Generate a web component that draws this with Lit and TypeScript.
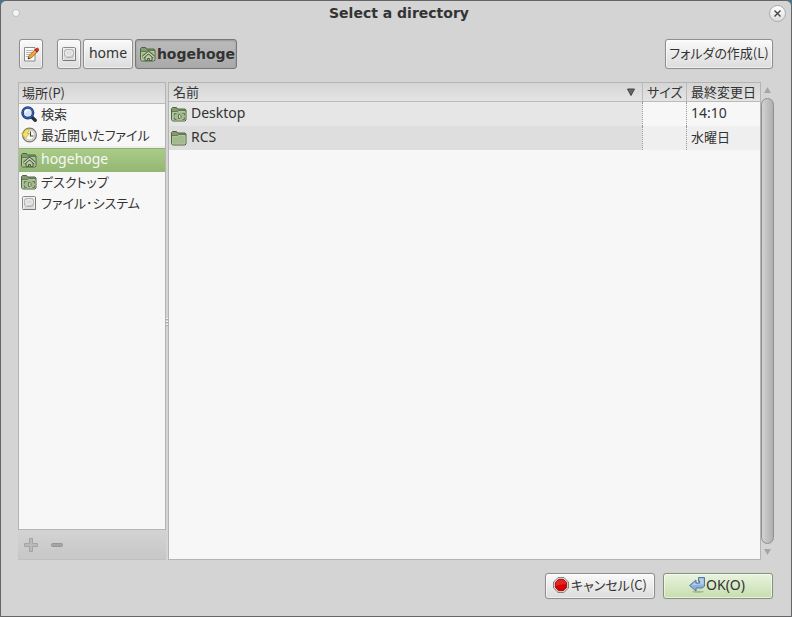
import { LitElement, html, css, svg, nothing } from "lit";
import { customElement, property } from "lit/decorators.js";
import { classMap } from "lit/directives/class-map.js";

const folderBase = svg`
  <path d="M.5 13.500v-11l1-1h4l1 1.500h7.500l1 1v10l-1 1h-12.500z" fill="#849b71" stroke="#4f6344"/>
  <path d="M1.500 6.500h5l1-1h6.500v8.500h-12.500z" fill="#a3b98e" stroke="#b3c79f"/>
  <path d="M1 5.500h5.500l1-1h6.500" fill="none" stroke="#647a56"/>`;

const icons = {
  folder: folderBase,
  home: svg`${folderBase}
    <path d="M5 10.500v4h7v-4L8.500 7.500z" fill="#b9cba7" stroke="#4c6042"/>
    <path d="M3 11.200l5.500-4.700 5.500 4.700" fill="none" stroke="#4c6042" stroke-width="3"/>
    <path d="M3 11.200l5.500-4.700 5.500 4.700" fill="none" stroke="#cbdabc" stroke-width="1.300"/>
    <path d="M7.500 14.500v-2h2v2" fill="#92a97e" stroke="#4c6042"/>`,
  desktop: svg`${folderBase}
    <path d="M3.500 9.500v-2h2M11.500 7.500h2v2M13.500 11.500v2h-2M5.500 13.500h-2v-2" fill="none" stroke="#60755a"/>
    <path d="M7.500 8.500h1.500l1 1v2l-1 1h-1.500z" fill="#c3d4b2" stroke="#60755a"/>`,
  drive: svg`
    <rect x="1.500" y="1.500" width="13" height="13" rx="1" fill="#efefef" stroke="#8c8c8c"/>
    <path d="M14.500 2v12.500H2" fill="none" stroke="#777"/>
    <rect x="3.500" y="3.500" width="9" height="8" rx="2" fill="#cacaca" stroke="#b4b4b4"/>
    <ellipse cx="8" cy="7" rx="3.600" ry="2.400" fill="#dcdcdc" stroke="#f4f4f4"/>
    <path d="M4.500 10.500l3-2" stroke="#efefef"/>
    <path d="M3 13h10" stroke="#c8c8c8"/>`,
  edit: svg`
    <path d="M1.500 1.500h10.500v13.500h-10.500z" fill="#fafafa" stroke="#8b8b8b"/>
    <path d="M3 4.500h7M3 6.500h6M3 8.500h4M3 10.500h3" stroke="#b5b5b5"/>
    <path d="M5 13l1-3.200 6-6 2.200 2.200-6 6z" fill="#f0a63c" stroke="#8f5a14" stroke-width=".8"/>
    <path d="M11.800 4l1.500-1.500q1.200-.7 2 .2t.2 1.800L14.200 6z" fill="#e0342c" stroke="#a8201a"/>
    <path d="M5 13l.6-1.800 1.200 1.200z" fill="#222"/>`,
  search: svg`
    <path d="M11 11.300l3.200 3" stroke="#29303d" stroke-width="3.400" stroke-linecap="round"/>
    <circle cx="6.800" cy="6.800" r="5.300" fill="#d9e4f3" stroke="#18357f" stroke-width="2.600"/>
    <circle cx="6.800" cy="6.800" r="5.300" fill="none" stroke="#4a70be" stroke-width=".9"/>
    <path d="M4.200 6.500q.5-2.500 3-2.500" fill="none" stroke="#fff" stroke-width="1.300"/>`,
  recent: svg`
    <circle cx="8.500" cy="8" r="6.900" fill="#deded8" stroke="#77776f" stroke-width="1.200"/>
    <circle cx="8.500" cy="8" r="5" fill="#fafaf7" stroke="#b9b9b2" stroke-width=".8"/>
    <path d="M9.500 4.500v4.500h3" fill="none" stroke="#444" stroke-width="1.100"/>
    <path d="M8 1.800Q3 2.500 2.800 6.500H.5l4 4.800 4.200-4.800H6.200Q6.200 4.800 8 4.800z" fill="#f4e36a" stroke="#c4a728" stroke-width=".7"/>`,
  stop: svg`
    <path d="M5 .6h6L15.400 5v6L11 15.400H5L.6 11V5z" fill="#f3f3ef" stroke="#77776f"/>
    <path d="M5.500 2.300h5l3.200 3.200v5l-3.200 3.200h-5l-3.200-3.200v-5z" fill="#d40000" stroke="#8e0000" stroke-width=".8"/>
    <path d="M5.600 3h4.800l2.600 2.600v1.800Q8 7 3 9V5.600z" fill="#ef3a3a" opacity=".6"/>`,
  enter: svg`
    <ellipse cx="9" cy="14.800" rx="6" ry="1.100" fill="#000" opacity=".18"/>
    <path d="M.6 8.500L7 3v3h3.500V4.500H9.500v-4h6v8.500l-2 2H7v3z" fill="#8db0dc" stroke="#55779f" stroke-linejoin="round"/>
    <path d="M2.300 8.500L6 5.300V7h5.500V3.500h-1v-2h4v6Q8 7.500 2.300 8.500z" fill="#c3d7f0" opacity=".8"/>`,
  plus: svg`<path d="M6.500 1.500h3v5h5v3h-5v5h-3v-5h-5v-3h5z" fill="#b9bbb7" stroke="#a3a5a1" stroke-linejoin="round"/>`,
  minus: svg`<rect x="2.500" y="6.500" width="11" height="3" rx="1" fill="#a5a5a2" stroke="#969693"/>`,
};
type IconName = keyof typeof icons;

@customElement("ui-icon")
class UiIcon extends LitElement {
  @property() name: IconName = "folder";
  static styles = css`
    :host { display: block; flex: none; width: 16px; height: 16px; }
    svg { display: block; width: 100%; height: 100%; }
  `;
  render() {
    return html`<svg viewBox="0 0 16 16" aria-hidden="true">${icons[this.name]}</svg>`;
  }
}

interface Place { icon: IconName; label: string; ja?: boolean; selected?: boolean; }

const locations: Place[] = [
  { icon: "search", label: "検索", ja: true },
  { icon: "recent", label: "最近開いたファイル", ja: true },
];
const places: Place[] = [
  { icon: "home", label: "hogehoge", selected: true },
  { icon: "desktop", label: "デスクトップ", ja: true },
  { icon: "drive", label: "ファイル･システム", ja: true },
];
const files: { icon: IconName; name: string; size: string; modified: string; ja?: boolean }[] = [
  { icon: "desktop", name: "Desktop", size: "", modified: "14:10" },
  { icon: "folder", name: "RCS", size: "", modified: "水曜日", ja: true },
];

@customElement("app-root")
class AppRoot extends LitElement {
  static styles = css`
    :host {
      display: block;
      background: #3f7a8c;
      font: 14px/20px "Noto Sans", "Noto Sans CJK JP", sans-serif;
      color: #333;
    }
    * { box-sizing: border-box; }
    button { font: inherit; color: inherit; margin: 0; padding: 0; border: 0; background: none; }
    .ja, button.ja { font-family: "Noto Sans CJK JP", sans-serif; font-size: 13px; font-feature-settings: "palt"; }
    .window {
      display: flex;
      flex-direction: column;
      min-height: 100vh;
      padding: 0 17px 17px;
      border: 1px solid #666;
      border-radius: 6px 6px 0 0;
      background: #d4d4d4;
    }
    .titlebar {
      display: grid;
      grid-template-columns: 26px 1fr 20px;
      align-items: center;
      height: 24px;
      margin: 0 -12px;
    }
    .title { margin: 0; font: bold 14px/20px "DejaVu Sans", sans-serif; text-align: center; }
    .dot {
      width: 8px; height: 8px;
      margin-left: 6px;
      border: 1px solid #bbb;
      border-radius: 50%;
      background: #f6f6f6;
    }
    .close {
      display: grid;
      place-items: center;
      width: 17px; height: 17px;
      justify-self: end;
      border: 1px solid #aaa;
      border-radius: 50%;
      background: linear-gradient(#fff, #ddd);
    }
    .close svg { width: 7px; height: 7px; }
    .pathbar { display: flex; gap: 2px; margin: 14px 1px 13px; }
    .button {
      display: flex;
      align-items: center;
      justify-content: center;
      gap: 2px;
      border: 1px solid #8f8f8f;
      border-radius: 3px;
      background: linear-gradient(#fafafa, #dcdcdc);
      box-shadow: 0 0 1px #9998, inset 0 0 0 1px #fff8;
      white-space: nowrap;
    }
    .pathbar .button { height: 30px; min-width: 24px; padding: 0 3px; }
    .pathbar .crumb { width: 50px; padding-bottom: 2px; }
    .edit { margin-right: 12px; }
    .pathbar .button.current {
      width: 102px;
      gap: 1px;
      padding: 0 1px 0 4px;
      border-color: #777;
      background: linear-gradient(#bcbcbc, #a9a9a9);
      box-shadow: inset 0 1px 2px #0003;
      font: bold 14px/20px "DejaVu Sans", sans-serif;
    }
    .pathbar .create { width: 108px; margin-left: auto; padding-bottom: 2px; }
    .panes { display: flex; flex: 1; }
    .grip {
      display: flex;
      flex-direction: column;
      justify-content: center;
      gap: 2px;
      width: 2px;
    }
    .grip i { height: 1px; background: #f4f4f4; box-shadow: 0 1px #aaa; }
    .sidebar { display: flex; flex-direction: column; width: 148px; }
    .places { flex: 1; border: 1px solid #b4b4b4; background: #f7f7f7; }
    .head, th {
      border-bottom: 1px solid #bbb;
      background: linear-gradient(#d5d5d5, #e4e4e4);
    }
    .head { height: 21px; margin: 0; padding: 0 3px; font-weight: normal; }
    .list { margin: 0; padding: 0; list-style: none; }
    .list + .list { border-top: 2px solid #eee; }
    .place {
      display: flex;
      align-items: center;
      gap: 4px;
      width: 100%;
      height: 21px;
      padding: 0 2px;
      white-space: nowrap;
    }
    .place.ja { padding-bottom: 2px; }
    .place.selected {
      height: 24px;
      padding-bottom: 1px;
      background: linear-gradient(#a9cc88, #93b672);
      border-top: 1px solid #8fae72;
      color: #f7f7f7;
    }
    .place.selected span, .name span { padding-bottom: 2px; }
    .actions {
      display: flex;
      align-items: center;
      gap: 10px;
      height: 30px;
      padding: 0 5px;
      border-bottom: 1px solid #c0c0c0;
      background: linear-gradient(#d3d3d3, #c7c7c7);
    }
    .files { flex: 1; border: 1px solid #b4b4b4; background: #f7f7f7; }
    table { width: 100%; border-collapse: separate; border-spacing: 0; table-layout: fixed; }
    th { height: 19px; padding: 0 4px; line-height: 18px; font-weight: normal; text-align: left; white-space: nowrap; }
    th + th { border-left: 1px solid #bbb; }
    .size { width: 44px; }
    .date { width: 74px; }
    .sort { display: flex; justify-content: space-between; align-items: center; }
    .sort svg { width: 8px; height: 8px; margin-right: 3px; }
    td { height: 24px; padding: 0 4px 2px; background: #f7f7f7; }
    td + td { border-left: 1px dotted #999; }
    tr:nth-child(even) td { background: #efefef; }
    td:first-child { padding: 0 2px; background: #e6e6e6; }
    tr:nth-child(even) td:first-child { background: #dedede; }
    .name { display: flex; align-items: center; gap: 4px; }
    .scroll {
      display: flex;
      flex-direction: column;
      align-items: center;
      width: 13px;
    }
    .scroll svg { width: 7px; height: 16px; }
    .thumb {
      flex: 1;
      width: 13px;
      border: 1px solid #8e8e8e;
      border-radius: 7px;
      background: linear-gradient(90deg, #d2d2d2, #afafaf);
    }
    .footer { display: flex; justify-content: flex-end; gap: 8px; margin: 13px 1px 0; }
    .footer .button { width: 110px; height: 26px; padding-bottom: 2px; }
    .footer .ok {
      gap: 1px;
      padding-right: 2px;
      border-color: #879479;
      background: linear-gradient(#e9f3df, #c6deae);
    }
  `;

  private place(p: Place) {
    return html`<li>
      <button class=${classMap({ place: true, ja: !!p.ja, selected: !!p.selected })}
        aria-current=${p.selected ? "true" : nothing}>
        <ui-icon name=${p.icon}></ui-icon><span>${p.label}</span>
      </button>
    </li>`;
  }

  render() {
    return html`
      <main class="window">
        <header class="titlebar">
          <span class="dot"></span>
          <h1 class="title">Select a directory</h1>
          <button class="close" aria-label="Close">
            <svg viewBox="0 0 7 7"><path d="M.5 .5l6 6M6.500 .5l-6 6" stroke="#444" stroke-width="1.400"/></svg>
          </button>
        </header>
        <nav class="pathbar">
          <button class="button edit" aria-label="Edit path"><ui-icon name="edit"></ui-icon></button>
          <button class="button" aria-label="/"><ui-icon name="drive"></ui-icon></button>
          <button class="button crumb">home</button>
          <button class="button current"><ui-icon name="home"></ui-icon>hogehoge</button>
          <button class="button create ja">フォルダの作成(L)</button>
        </nav>
        <div class="panes">
          <aside class="sidebar">
            <div class="places">
              <h2 class="head ja">場所(P)</h2>
              <ul class="list">${locations.map((p) => this.place(p))}</ul>
              <ul class="list">${places.map((p) => this.place(p))}</ul>
            </div>
            <div class="actions">
              <button aria-label="Add" disabled><ui-icon name="plus"></ui-icon></button>
              <button aria-label="Remove" disabled><ui-icon name="minus"></ui-icon></button>
            </div>
          </aside>
          <div class="grip" role="separator" aria-orientation="vertical"><i></i><i></i><i></i></div>
          <section class="files">
            <table>
              <thead>
                <tr class="ja">
                  <th aria-sort="descending"><div class="sort">名前
                    <svg viewBox="0 0 8 8"><path d="M.5 1h7L4 7.500z" fill="#666" stroke="#444"/></svg></div></th>
                  <th class="size">サイズ</th>
                  <th class="date">最終変更日</th>
                </tr>
              </thead>
              <tbody>
                ${files.map((f) => html`<tr>
                  <td><div class="name"><ui-icon name=${f.icon}></ui-icon><span>${f.name}</span></div></td>
                  <td>${f.size}</td>
                  <td class=${classMap({ ja: !!f.ja })}>${f.modified}</td>
                </tr>`)}
              </tbody>
            </table>
          </section>
          <div class="scroll">
            <svg viewBox="0 0 7 16"><path d="M0 11h7L3.500 5z" fill="#a5a5a5"/></svg>
            <div class="thumb"></div>
            <svg viewBox="0 0 7 16"><path d="M0 5h7l-3.500 6z" fill="#a5a5a5"/></svg>
          </div>
        </div>
        <footer class="footer">
          <button class="button ja"><ui-icon name="stop"></ui-icon>キャンセル(C)</button>
          <button class="button ok"><ui-icon name="enter"></ui-icon>OK(O)</button>
        </footer>
      </main>
    `;
  }
}
